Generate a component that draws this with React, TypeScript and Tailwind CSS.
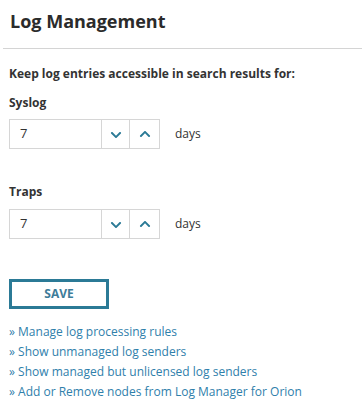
import { FaChevronDown, FaChevronUp } from "react-icons/fa";

const links = [
  "Manage log processing rules",
  "Show unmanaged log senders",
  "Show managed but unlicensed log senders",
  "Add or Remove nodes from Log Manager for Orion",
];

const DaysSpinner = ({ value }: { value: string }) => (
  <div className="flex items-center">
    <div className="flex h-[30px] w-[151px] border border-[#d6d6d6] bg-white">
      <div className="flex flex-1 items-center pl-[10px] text-[13px] text-[#333]">
        {value}
      </div>
      <button className="flex w-[28px] items-center justify-center border-l border-[#d6d6d6] pt-[1px]">
        <FaChevronDown size={12} className="text-[#2b7a96]" />
      </button>
      <button className="flex w-[30px] items-center justify-center border-l border-[#d6d6d6]">
        <FaChevronUp size={12} className="text-[#2b7a96]" />
      </button>
    </div>
    <span className="ml-[15px] text-[12px] text-[#333]">days</span>
  </div>
);

export default function App() {
  return (
    <div
      className="h-[416px] w-[362px] bg-white text-[#333]"
      style={{ fontFamily: '"Open Sans", "Liberation Sans", sans-serif' }}
    >
      <div className="ml-[3px] h-[49px] border-b border-[#d4d4d4] pl-[7px] pt-[9px]">
        <h1 className="text-[18px] font-bold leading-[24px] text-[#2b2b2b]">
          Log Management
        </h1>
      </div>

      <div className="px-[9px] pt-[17px]">
        <p className="text-[12px] font-bold leading-[16px]">
          Keep log entries accessible in search results for:
        </p>
        <p className="mt-[13px] text-[12px] font-bold leading-[16px]">Syslog</p>
        <div className="mt-[8px]">
          <DaysSpinner value="7" />
        </div>

        <p className="mt-[35px] text-[12px] font-bold leading-[16px]">Traps</p>
        <div className="mt-[9px]">
          <DaysSpinner value="7" />
        </div>

        <button className="mt-[40px] flex h-[30px] w-[100px] items-center justify-center border-[3px] border-[#2b7a96] text-[12px] font-bold text-[#3d7c99]">
          SAVE
        </button>

        <ul className="mt-[13px] text-[12px] leading-[20px] text-[#2f80ab]">
          {links.map((l) => (
            <li key={l}>
              <a href="#">» {l}</a>
            </li>
          ))}
        </ul>
      </div>
    </div>
  );
}
